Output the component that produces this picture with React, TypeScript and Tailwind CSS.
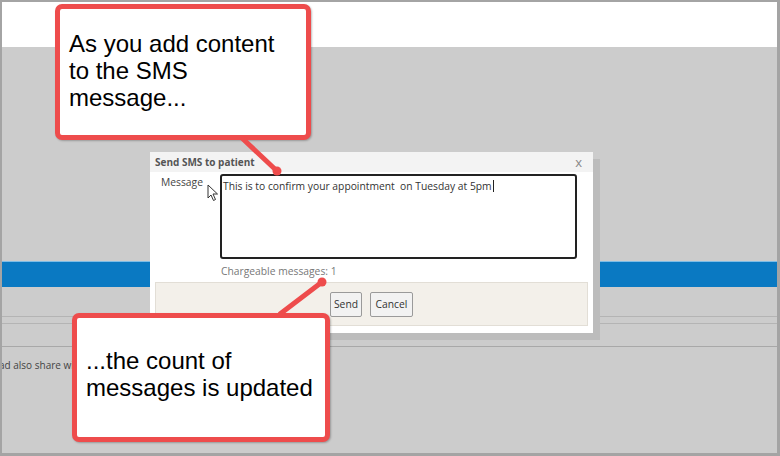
import React from "react";

const dialogFont = { fontFamily: '"Open Sans", "DejaVu Sans", sans-serif' };
const calloutFont = { fontFamily: '"Liberation Sans", Arial, sans-serif' };

function Cursor() {
  return (
    <svg width="12" height="18" viewBox="0 0 12 18" className="absolute left-[205px] top-[182px]">
      <path
        d="M1 1 L1 14 L4 11 L6.5 16.5 L8.5 15.5 L6 10 L10.5 10 Z"
        fill="#ffffff"
        stroke="#333333"
        strokeWidth="1"
        strokeLinejoin="round"
      />
    </svg>
  );
}

function Callout({
  lines,
  className,
}: {
  lines: string[];
  className: string;
}) {
  return (
    <div
      className={`absolute rounded-[7px] border-[5px] border-[#ee4c4c] bg-white pl-[9px] text-[24px] leading-[27px] text-black shadow-[1px_1px_2px_rgba(0,0,0,0.25)] ${className}`}
      style={calloutFont}
    >
      {lines.map((l) => (
        <div key={l}>{l}</div>
      ))}
    </div>
  );
}

function SmsDialog() {
  return (
    <div
      className="absolute left-[148px] top-[150px] flex h-[181px] w-[443px] flex-col bg-white shadow-[7px_7px_0_0_#bcbcbc]"
      style={dialogFont}
    >
      <div className="flex h-[20px] items-center justify-between bg-[#f3f3f3] pl-[5px] pr-[11px]">
        <span className="text-[10px] font-bold text-[#555555]">Send SMS to patient</span>
        <span className="text-[13px] leading-none text-[#888888]">x</span>
      </div>
      <div className="flex pl-[11px] pt-[2px]">
        <div className="w-[59px] pt-[1px] text-[10.3px] text-[#444444]">Message</div>
        <div className="h-[85px] w-[357px] rounded-[3px] border-2 border-[#222222] px-[1px] pt-[2px] text-[10.3px] text-[#333333]">
          This is to confirm your appointment&nbsp; on Tuesday at 5pm
          <span className="ml-[1px] inline-block h-[12px] w-px translate-y-[2px] bg-[#222222]" />
        </div>
      </div>
      <div className="pl-[71px] pt-[5px] text-[10.3px] text-[#777777]">Chargeable messages: 1</div>
      <div className="mx-[5px] mt-[3px] flex h-[44px] items-center justify-center gap-[8px] border border-[#e2ded6] bg-[#f3f0ea]">
        <button className="h-[25px] w-[32px] rounded-[2px] border border-[#9a9a9a] bg-[#f2f2f2] text-[10.3px] text-[#333333]">
          Send
        </button>
        <button className="h-[25px] w-[43px] rounded-[2px] border border-[#9a9a9a] bg-[#f2f2f2] text-[10.3px] text-[#333333]">
          Cancel
        </button>
      </div>
    </div>
  );
}

export default function App() {
  return (
    <div className="relative h-[456px] w-[780px] overflow-hidden border-b-[3px] border-l-2 border-r-[3px] border-t-2 border-[#a4a4a4] bg-[#cccccc]">
      <div className="h-[45px] bg-white" />
      <div className="h-[214px]" />
      <div className="h-[26px] border-t border-[#7fbde6] bg-[#0a79c2]" />
      <div className="h-[29px]" />
      <div className="h-px bg-[#b4b4b4]" />
      <div className="h-[6px]" />
      <div className="h-px bg-[#b4b4b4]" />
      <div className="h-[22px]" />
      <div className="h-px bg-[#a8a8a8]" />
      <div className="pt-[11px] text-[10px] leading-[14px] text-[#444444]" style={dialogFont}>
        <span className="-ml-[3px]">ad also share wit</span>
      </div>

      <SmsDialog />
      <Cursor />

      <Callout
        lines={["As you add content", "to the SMS", "message..."]}
        className="left-[53px] top-[2px] h-[136px] w-[256px] pt-[21px]"
      />
      <Callout
        lines={["...the count of", "messages is updated"]}
        className="left-[70px] top-[311px] h-[129px] w-[258px] pt-[29px]"
      />

      <svg className="pointer-events-none absolute left-[-2px] top-[-2px]" width="780" height="456">
        <line x1="243" y1="139" x2="277" y2="171" stroke="#ee4c4c" strokeWidth="5" strokeLinecap="round" />
        <circle cx="277" cy="171" r="4.5" fill="#ee4c4c" />
        <line x1="322" y1="282" x2="280" y2="314" stroke="#ee4c4c" strokeWidth="5" strokeLinecap="round" />
        <circle cx="322" cy="282" r="4.5" fill="#ee4c4c" />
      </svg>
    </div>
  );
}
